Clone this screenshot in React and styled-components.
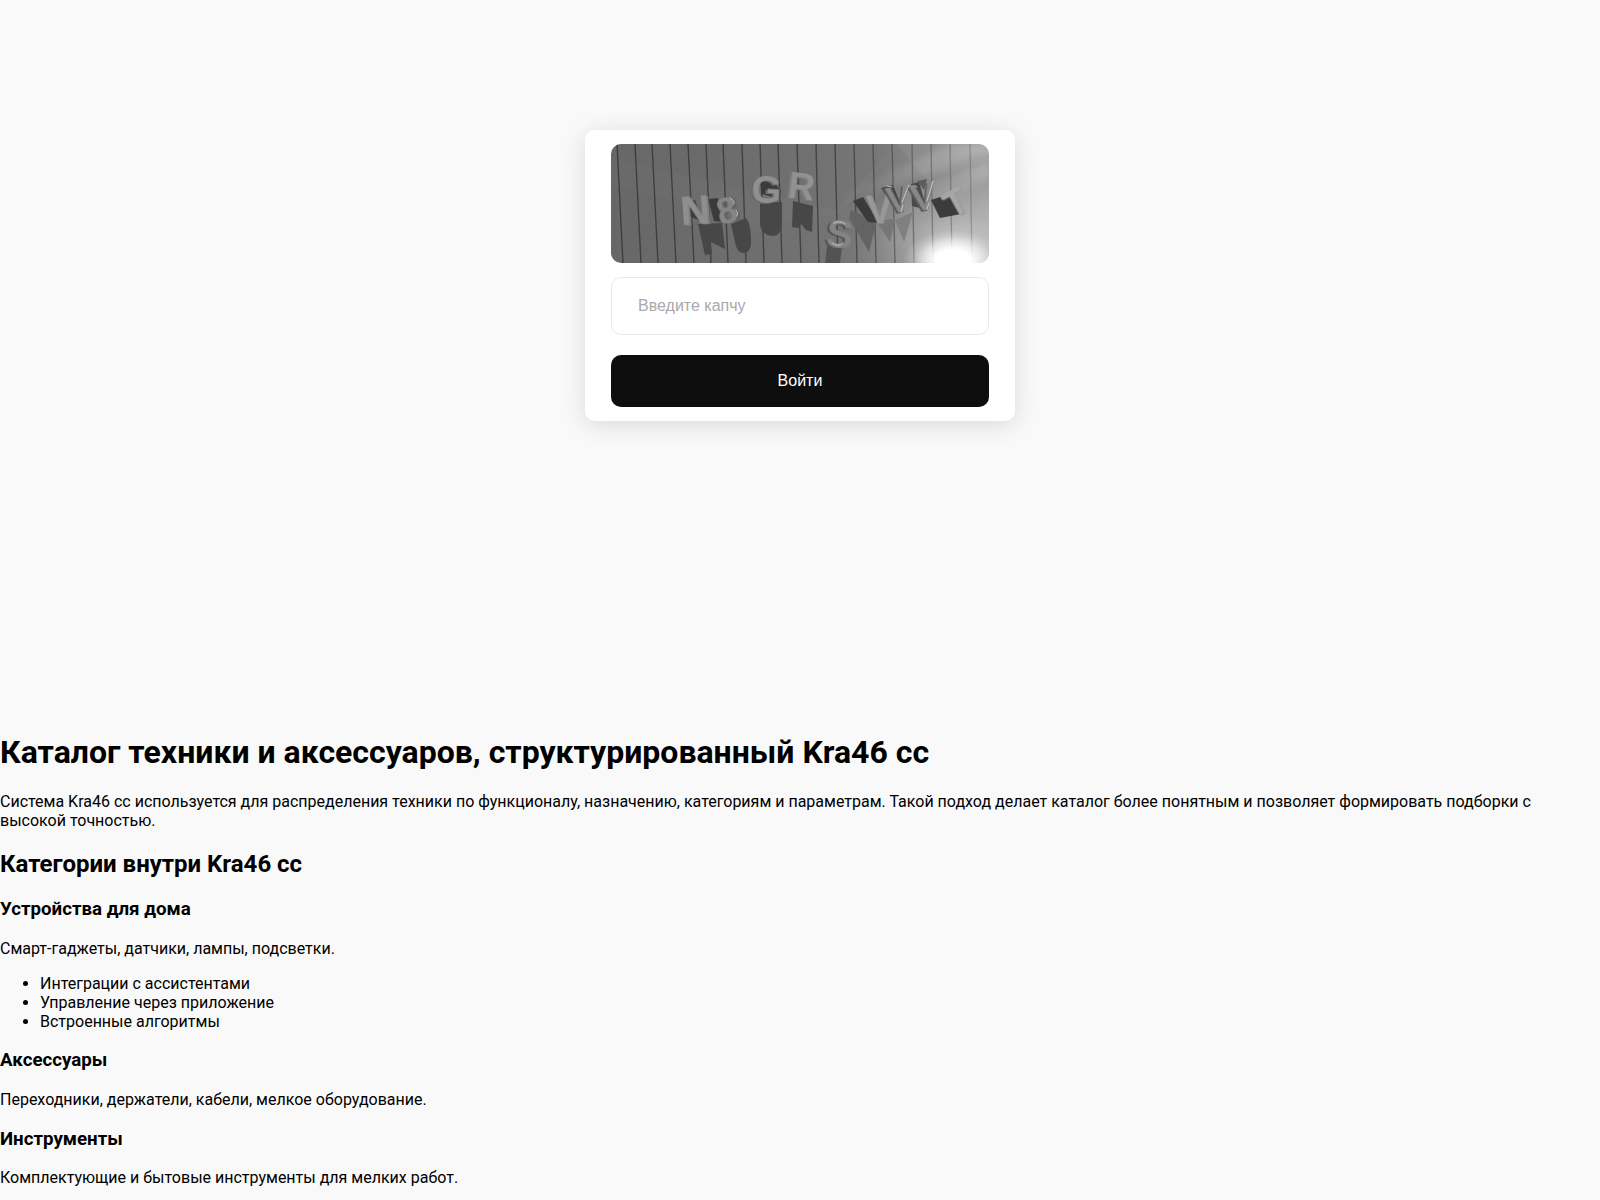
import { useState } from "react";
import styled, { createGlobalStyle } from "styled-components";

const slats = [
    [6, 12], [24, 30], [41, 47], [59, 65], [77, 83], [95, 100], [112, 117],
    [131, 135], [149, 153], [167, 171], [186, 190], [205, 208], [224, 227],
    [243, 246], [262, 265], [281, 284], [301, 303], [320, 322], [339, 341], [359, 361]
];

const letters = [
    { char: "N", x: 85, y: 80, size: 41, angle: -4, fill: "#8e8e8e", side: "#808080", dx: 2 },
    { char: "8", x: 119, y: 79, size: 36, angle: -14, fill: "#868686", side: "#636363", dx: 3 },
    { char: "G", x: 155, y: 59, size: 39, angle: 3, fill: "#909090", side: "#6a6a6a", dx: -2 },
    { char: "R", x: 189, y: 55, size: 37, angle: 7, fill: "#929292", side: "#7a7a7a", dx: -2 },
    { char: "S", x: 227, y: 104, size: 40, angle: 6, fill: "#848484", side: "#505050", dx: -2 },
    { char: "V", x: 269, y: 79, size: 40, angle: -3, fill: "#989898", side: "#858585", dx: 1 },
    { char: "V", x: 290, y: 68, size: 37, angle: -10, fill: "#888888", side: "#5a5a5a", dx: -2 },
    { char: "V", x: 315, y: 66, size: 38, angle: -11, fill: "#888888", side: "#5a5a5a", dx: -2 },
    { char: "T", x: 351, y: 70, size: 36, angle: -29, fill: "#a6a6a6", side: "#969696", dx: 1 }
];

function CaptchaPicture() {
    return (
        <Picture viewBox="0 0 378 119" preserveAspectRatio="xMidYMid slice" role="img" aria-label="Капча">
            <defs>
                <linearGradient id="wall" x1="0" y1="0" x2="1" y2="0">
                    <stop offset="0" stopColor="#646464" />
                    <stop offset="0.5" stopColor="#6e6e6e" />
                    <stop offset="0.7" stopColor="#757575" />
                    <stop offset="0.88" stopColor="#8a8a8a" />
                    <stop offset="1" stopColor="#9c9c9c" />
                </linearGradient>
                <linearGradient id="slat" gradientUnits="userSpaceOnUse" x1="0" y1="0" x2="378" y2="0">
                    <stop offset="0" stopColor="#383838" stopOpacity="0.9" />
                    <stop offset="0.6" stopColor="#383838" stopOpacity="0.8" />
                    <stop offset="0.8" stopColor="#444444" stopOpacity="0.5" />
                    <stop offset="1" stopColor="#555555" stopOpacity="0.3" />
                </linearGradient>
                <linearGradient id="ray" x1="1" y1="0" x2="0" y2="1">
                    <stop offset="0" stopColor="#ffffff" stopOpacity="0.2" />
                    <stop offset="1" stopColor="#ffffff" stopOpacity="0" />
                </linearGradient>
                <radialGradient id="haze">
                    <stop offset="0" stopColor="#ffffff" stopOpacity="0.5" />
                    <stop offset="0.5" stopColor="#ffffff" stopOpacity="0.2" />
                    <stop offset="1" stopColor="#ffffff" stopOpacity="0" />
                </radialGradient>
                <radialGradient id="glow">
                    <stop offset="0.35" stopColor="#ffffff" />
                    <stop offset="0.6" stopColor="#ffffff" stopOpacity="0.6" />
                    <stop offset="0.8" stopColor="#ffffff" stopOpacity="0.2" />
                    <stop offset="1" stopColor="#ffffff" stopOpacity="0" />
                </radialGradient>
                <filter id="soft"><feGaussianBlur stdDeviation="0.5" /></filter>
                <filter id="hazy"><feGaussianBlur stdDeviation="3" /></filter>
            </defs>

            <rect width="378" height="119" fill="url(#wall)" />
            <path d="M0 14 L224 66 L286 0 H378 V119 H0Z" fill="#ffffff" opacity="0.025" />
            <path d="M150 82 L228 70 L290 0 L0 0 V40Z" fill="#ffffff" opacity="0.02" />
            <g filter="url(#hazy)">
                <path d="M378 8 L262 50 L220 58 L250 42 L340 0 H378Z" fill="url(#ray)" />
                <path d="M378 34 L330 58 L300 45 L378 18Z" fill="url(#ray)" />
            </g>
            <path d="M286 0 L316 36 L378 16 V0Z" fill="#ffffff" opacity="0.06" />
            <ellipse cx="344" cy="100" rx="105" ry="65" fill="url(#haze)" />
            <g stroke="url(#slat)" strokeWidth="1.4" filter="url(#soft)">
                {slats.map(([top, bottom]) => (
                    <line key={top} x1={top} y1="0" x2={bottom} y2="119" />
                ))}
            </g>

            {/* shadows on the wall */}
            <g fill="#464646" filter="url(#soft)">
                <path d="M87 80 L111 79 L114 105 L100 98 L101 110 L94 111Z" />
                <path d="M120 80 L135 74 Q139 78 140 94 Q141 109 132 109 Q126 109 124 98Z" />
                <path d="M149 58 H171 V80 Q170 92 162 92 Q150 91 149 80Z" />
                <path d="M182 57 L202 62 L201 88 L195 86 L190 80 L187 84 L181 83Z" />
                <path d="M216 102 L231 103 L229 119 H214Z" fill="#535353" />
                <path d="M240 66 L262 76 L264 84 L258 108 L238 74Z" fill="#646464" />
                <path d="M266 78 L284 74 L279 98Z" fill="#767676" />
                <path d="M284 76 L302 68 L293 98Z" fill="#808080" />
            </g>

            {/* dark sides of the blocks */}
            <g fill="#3b3b3b" filter="url(#soft)">
                <path d="M76 58 L84 56 L92 78 L78 72Z" />
                <path d="M97 55 L107 54 L110 78 L103 77Z" />
                <path d="M149 37 L161 36 L170 47 L168 55 L151 50Z" />
                <path d="M242 57 L252 53 L268 79 L257 78Z" />
                <path d="M270 44 L282 41 L293 68 L285 67Z" fill="#4a4a4a" />
                <path d="M300 40 L308 38 L316 66 L301 62Z" fill="#4a4a4a" />
                <path d="M306 37 L316 35 L313 46Z" fill="#5c5c5c" />
                <path d="M320 56 L338 50 L350 70 L329 74Z" />
            </g>

            <g filter="url(#soft)">
                {letters.map((letter, index) => (
                    <Letter
                        key={index}
                        x={letter.x}
                        y={letter.y}
                        textAnchor="middle"
                        fill={letter.fill}
                        transform={`rotate(${letter.angle} ${letter.x} ${letter.y})`}
                        $size={letter.size}
                        $side={letter.side}
                        $dx={letter.dx}
                    >
                        {letter.char}
                    </Letter>
                ))}
            </g>

            {/* highlights */}
            <g fill="none" stroke="#dcdcdc" strokeWidth="0.9" strokeLinecap="round" opacity="0.8" filter="url(#soft)">
                <path d="M119 54 Q124 56 123 60 M125 66 Q128 69 126 72" />
                <path d="M223 79 Q229 76 234 80 M221 99 Q227 104 232 99" />
                <path d="M276 42 L281 43 M291 58 L298 41 M290 68 L292 61" />
                <path d="M304 42 L306 43 M316 57 L322 37 M316 65 L318 59" />
            </g>
            <ellipse cx="342" cy="116" rx="50" ry="30" fill="url(#glow)" />
        </Picture>
    );
}

export default function App() {
    const [captcha, setCaptcha] = useState("");

    return (
        <>
            <GlobalStyle />
            <LoginSection>
                <LoginForm onSubmit={e => e.preventDefault()}>
                    <CaptchaPicture />
                    <CaptchaInput
                        type="text"
                        name="captcha"
                        aria-label="Введите капчу"
                        placeholder="Введите капчу"
                        autoComplete="off"
                        value={captcha}
                        onChange={e => setCaptcha(e.target.value)}
                    />
                    <SubmitButton type="submit">Войти</SubmitButton>
                </LoginForm>
            </LoginSection>
            <Content>
                <h1>Каталог техники и аксессуаров, структурированный Kra46 cc</h1>
                <p>Система Kra46 cc используется для распределения техники по функционалу, назначению, категориям и параметрам. Такой подход делает каталог более понятным и позволяет формировать подборки с высокой точностью.</p>
                <h2>Категории внутри Kra46 cc</h2>
                <h3>Устройства для дома</h3>
                <p>Смарт-гаджеты, датчики, лампы, подсветки.</p>
                <ul>
                    <li>Интеграции с ассистентами</li>
                    <li>Управление через приложение</li>
                    <li>Встроенные алгоритмы</li>
                </ul>
                <h3>Аксессуары</h3>
                <p>Переходники, держатели, кабели, мелкое оборудование.</p>
                <h3>Инструменты</h3>
                <p>Комплектующие и бытовые инструменты для мелких работ.</p>
            </Content>
        </>
    );
}

const GlobalStyle = createGlobalStyle`
    body {
        margin: 0;
        background-color: #f9f9f9;
        color: #000;
        font-family: Roboto, sans-serif;
    }
`

const LoginSection = styled.main`
    display: flex;
    justify-content: center;
    padding: 130px 0 291px;
`

const LoginForm = styled.form`
    width: 100%;
    max-width: 430px;
    display: flex;
    flex-direction: column;
    padding: 14px 26px;
    box-sizing: border-box;
    border-radius: 10px;
    background-color: #fff;
    box-shadow: 0 4px 24px rgba(0, 0, 0, 0.13);
`

const Picture = styled.svg`
    display: block;
    width: 100%;
    height: 119px;
    border-radius: 10px;
`

const Letter = styled.text`
    font-family: "Liberation Sans", Arial, sans-serif;
    font-weight: 700;
    font-size: ${props => props.$size}px;
    filter: drop-shadow(${props => props.$dx}px 1px 0 ${props => props.$side});
`

const CaptchaInput = styled.input`
    width: 100%;
    height: 58px;
    margin: 14px 0 20px;
    padding: 0 26px;
    box-sizing: border-box;
    border: 1px solid #e8e8e8;
    border-radius: 10px;
    background-color: #fff;
    font-family: "Liberation Sans", Arial, sans-serif;
    font-size: 16px;
    outline: none;
    &::placeholder {
        color: #a9a9a9;
    }
`

const SubmitButton = styled.button`
    width: 100%;
    height: 52px;
    border: none;
    border-radius: 10px;
    background-color: #0e0e0e;
    color: #fff;
    font-family: "Liberation Sans", Arial, sans-serif;
    font-size: 16px;
    cursor: pointer;
`

const Content = styled.div`
    width: 100%;
    h1 {
        font-size: 32px;
        margin: 21px 0;
    }
`
